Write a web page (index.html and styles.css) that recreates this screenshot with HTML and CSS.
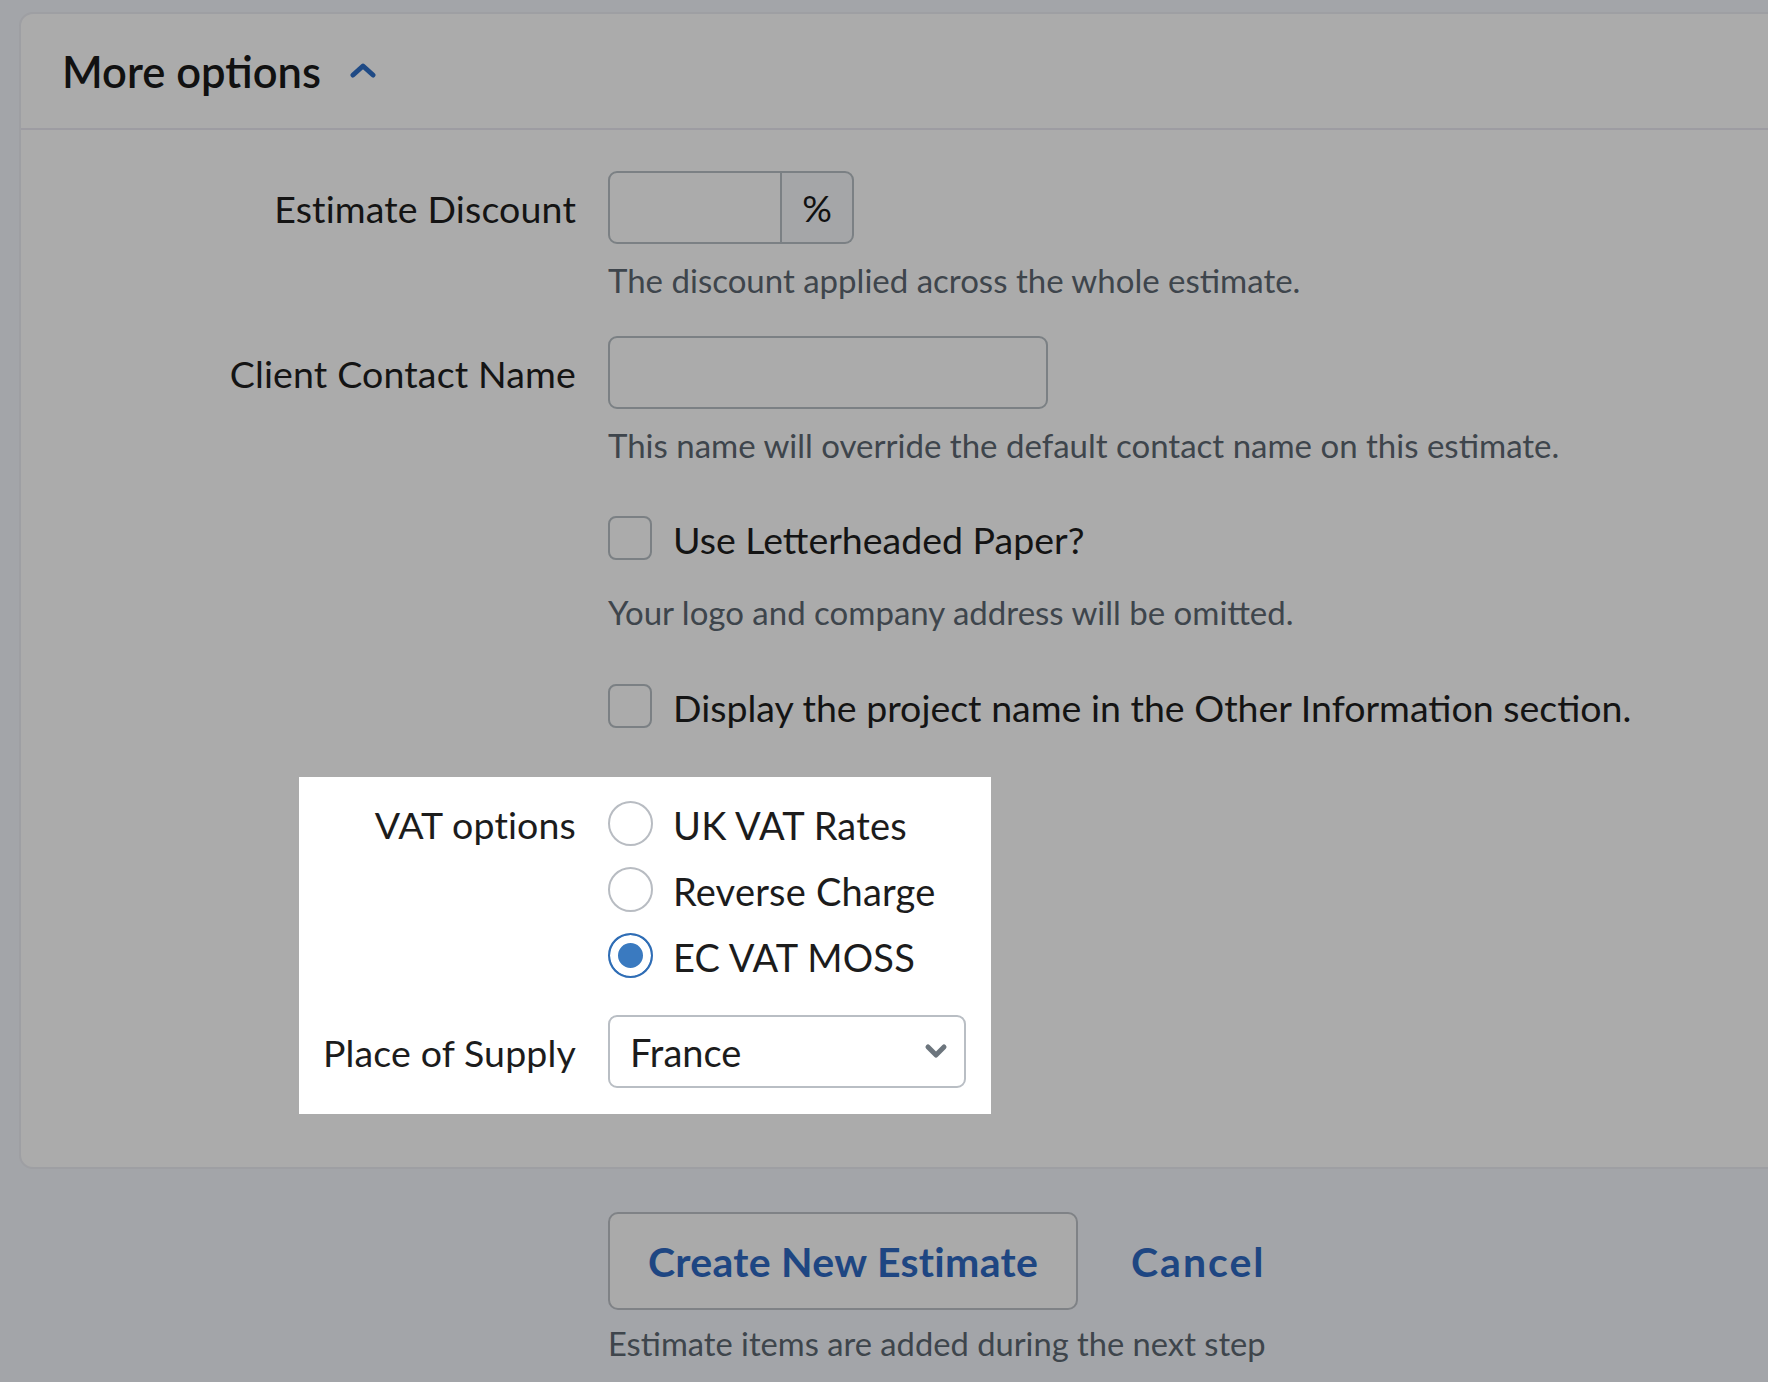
FILE: index.html
```html
<!doctype html>
<html lang="en">
<head>
    <meta charset="UTF-8">
    <meta name="viewport" content="width=device-width, initial-scale=1.0">
    <title>New Estimate</title>
    <link rel="stylesheet" href="styles.css">
</head>
<body>
    <div class="page">
        <!-- More options panel -->
        <section class="card">
            <header class="card-header">
                <h2>More options</h2>
                <svg class="toggle" width="26" height="16" viewBox="0 0 26 16">
                    <polyline points="3,13 13,4 23,13" fill="none" stroke="#1f4a85" stroke-width="5" stroke-linecap="round" stroke-linejoin="round"/>
                </svg>
            </header>

            <div class="card-body">
                <div class="form-row">
                    <label class="form-label" for="discount">Estimate Discount</label>
                    <div class="form-field">
                        <div class="input-group">
                            <input type="text" id="discount" class="input input-short">
                            <span class="addon">%</span>
                        </div>
                        <p class="help">The discount applied across the whole estimate.</p>
                    </div>
                </div>

                <div class="form-row row-contact">
                    <label class="form-label" for="contact">Client Contact Name</label>
                    <div class="form-field">
                        <input type="text" id="contact" class="input input-medium">
                        <p class="help">This name will override the default contact name on this estimate.</p>
                    </div>
                </div>

                <div class="form-row row-check">
                    <span class="form-label"></span>
                    <div class="form-field">
                        <label class="check">
                            <input type="checkbox" class="checkbox">
                            <span>Use Letterheaded Paper?</span>
                        </label>
                        <p class="help help-check">Your logo and company address will be omitted.</p>
                    </div>
                </div>

                <div class="form-row row-check2">
                    <span class="form-label"></span>
                    <div class="form-field">
                        <label class="check">
                            <input type="checkbox" class="checkbox">
                            <span>Display the project name in the Other Information section.</span>
                        </label>
                    </div>
                </div>

                <!-- VAT block (highlighted) -->
                <div class="vat-box">
                    <div class="vat-row">
                        <span class="form-label vat-label">VAT options</span>
                        <div class="radios">
                            <label class="check">
                                <input type="radio" name="vat" class="radio">
                                <span>UK VAT Rates</span>
                            </label>
                            <label class="check">
                                <input type="radio" name="vat" class="radio">
                                <span>Reverse Charge</span>
                            </label>
                            <label class="check">
                                <input type="radio" name="vat" class="radio" checked>
                                <span>EC VAT MOSS</span>
                            </label>
                        </div>
                    </div>
                    <div class="vat-row row-supply">
                        <label class="form-label" for="supply">Place of Supply</label>
                        <div class="select">
                            <select id="supply">
                                <option>France</option>
                            </select>
                            <svg class="select-arrow" width="24" height="16" viewBox="0 0 24 16">
                                <polyline points="4,4 12,12 20,4" fill="none" stroke="#6c757d" stroke-width="5" stroke-linecap="round" stroke-linejoin="round"/>
                            </svg>
                        </div>
                    </div>
                </div>
            </div>
        </section>

        <!-- Actions -->
        <div class="actions">
            <div class="buttons">
                <button class="btn">Create New Estimate</button>
                <a class="link" href="#">Cancel</a>
            </div>
            <p class="help note">Estimate items are added during the next step</p>
        </div>
    </div>
</body>
</html>
```
FILE: styles.css
```css
/* page */
html, body {
    margin: 0;
    padding: 0;
    background-color: #a3a5a9;
    font-family: Lato, "Open Sans", sans-serif;
    color: #141414;
    overflow: hidden;
}

.page {
    padding: 12px 0 0 19px;
}

/* card */
.card {
    width: calc(100% + 40px);
    background-color: #ababab;
    border: 2px solid #9e9fa3;
    border-radius: 14px;
    box-sizing: border-box;
}

.card-header {
    height: 114px;
    display: flex;
    align-items: center;
    padding: 0 41px;
    border-bottom: 2px solid #9d9ca2;
}

.card-header h2 {
    margin: 0;
    font-size: 43.5px;
    font-weight: 600;
    line-height: 1.2;
    color: #111;
}

.toggle {
    margin-left: 29px;
    margin-top: -2px;
}

.card-body {
    padding: 41px 0 53px 0;
}

/* rows */
.form-row {
    display: grid;
    grid-template-columns: 555px 1fr;
    column-gap: 32px;
}

.form-label {
    text-align: right;
    white-space: nowrap;
    font-size: 37.5px;
    letter-spacing: 0.15px;
    line-height: 76px;
    height: 73px;
    color: #141414;
}

.row-contact {
    margin-top: 36px;
}

.row-check {
    margin-top: 51px;
}

.row-check2 {
    margin-top: 52px;
}

.row-check .form-label,
.row-check2 .form-label {
    height: 0;
}

/* inputs */
.input {
    height: 73px;
    box-sizing: border-box;
    border: 2px solid #7b8084;
    border-radius: 9px;
    background: transparent;
    font-family: inherit;
    font-size: 36px;
    padding: 0 20px;
    outline: none;
}

.input-group {
    display: flex;
    width: 246px;
}

.input-short {
    width: 174px;
    border-radius: 9px 0 0 9px;
}

.addon {
    width: 72px;
    height: 73px;
    box-sizing: border-box;
    border: 2px solid #7b8084;
    border-left: none;
    border-radius: 0 9px 9px 0;
    background-color: #a5a6a8;
    display: flex;
    align-items: center;
    justify-content: center;
    font-size: 37px;
    color: #111;
}

.input-medium {
    width: 440px;
}

.help {
    margin: 16px 0 0 0;
    font-size: 33px;
    line-height: 40px;
    color: #3e454c;
}

.help-check {
    margin-top: 32px;
}

/* checkbox and radio */
.check {
    display: flex;
    align-items: center;
    height: 44px;
    font-size: 37.5px;
    line-height: 44px;
    color: #141414;
}

.radios .check {
    font-size: 38px;
    letter-spacing: 0.2px;
}

.check span {
    margin-top: 3px;
    white-space: nowrap;
}

.checkbox {
    appearance: none;
    -webkit-appearance: none;
    width: 44px;
    height: 44px;
    margin: 0 21px 0 0;
    border: 2px solid #7b8084;
    border-radius: 8px;
    background: transparent;
    flex-shrink: 0;
}

.radio {
    appearance: none;
    -webkit-appearance: none;
    width: 45px;
    height: 45px;
    margin: 0 20px 0 0;
    border: 2px solid #b8bcc2;
    border-radius: 50%;
    background: #fff;
    flex-shrink: 0;
}

.radio:checked {
    border-color: #2f6db5;
    background: #3a7ac0;
    box-shadow: inset 0 0 0 8px #fff;
}

/* VAT block */
.vat-box {
    width: fit-content;
    margin: 49px 0 0 278px;
    padding: 24px 25px 26px 12px;
    background-color: #fff;
}

.vat-row {
    display: grid;
    grid-template-columns: 265px 358px;
    column-gap: 32px;
}

.vat-box .form-label,
.vat-box .check {
    color: #1c1c1c;
}

.vat-label {
    line-height: 48px;
    height: 44px;
}

.radios {
    display: flex;
    flex-direction: column;
    gap: 22px;
}

.row-supply {
    margin-top: 38px;
}

.select {
    position: relative;
}

.select select {
    appearance: none;
    -webkit-appearance: none;
    width: 100%;
    height: 73px;
    box-sizing: border-box;
    border: 2px solid #b9bec4;
    border-radius: 9px;
    background: #fff;
    padding: 0 20px 0 20px;
    font-family: inherit;
    font-size: 38px;
    color: #1c1c1c;
    outline: none;
}

.select-arrow {
    position: absolute;
    right: 18px;
    top: 28px;
    pointer-events: none;
}

/* actions below the card */
.actions {
    padding: 43px 0 0 589px;
}

.buttons {
    display: flex;
    align-items: center;
}

.btn {
    width: 470px;
    height: 98px;
    border: 2px solid #7f8286;
    border-radius: 10px;
    background-color: #aaaaaa;
    font-family: inherit;
    font-size: 41px;
    font-weight: 700;
    letter-spacing: 0.3px;
    color: #1e4682;
    cursor: pointer;
}

.link {
    margin-left: 53px;
    font-size: 41px;
    font-weight: 700;
    letter-spacing: 2px;
    color: #1e4682;
    text-decoration: none;
}

.note {
    margin-top: 14px;
    font-size: 32.7px;
}
```
